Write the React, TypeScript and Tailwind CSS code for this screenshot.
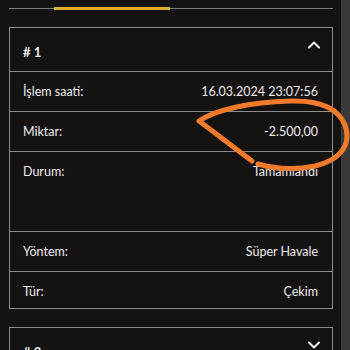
import { ChevronUp, ChevronDown } from "lucide-react"

const rows = [
  { label: "İşlem saati:", value: "16.03.2024 23:07:56", h: "h-[40px]" },
  { label: "Miktar:", value: "-2.500,00", h: "h-[40px]" },
  { label: "Durum:", value: "Tamamlandı", h: "h-[80px]" },
  { label: "Yöntem:", value: "Süper Havale", h: "h-[40px]" },
  { label: "Tür:", value: "Çekim", h: "h-[37px]" },
]

export default function App() {
  return (
    <div className="relative flex h-[350px] w-[350px] overflow-hidden bg-[#151212] font-['Lato',sans-serif] text-[12.5px] text-[#ececec]">
      <div className="flex-1 pl-[9px] pr-[8px]">
        {/* Tabs */}
        <div className="flex h-[9px] items-end border-b border-[#7a7a7a]">
          <div className="w-[45px]" />
          <div className="-mb-[2px] flex h-[24px] w-[116px] items-end justify-center border-b-[3px] border-[#ddb02c] pb-[8px] leading-none">
            Para yatırma geçmişi
          </div>
          <div className="flex h-[24px] flex-1 items-end justify-center pb-[9px] leading-none">Para çekme geçmişi</div>
        </div>

        {/* Card 1 */}
        <div className="mt-[18px] border border-[#8c8c8c]">
          <div className="flex h-[43px] items-center justify-between pl-[13px] pr-[8px] pt-[6px]">
            <span className="text-[13px] font-bold">#&nbsp;1</span>
            <ChevronUp className="-mt-[15px] h-[20px] w-[20px]" strokeWidth={2.5} />
          </div>
          {rows.map((r) => (
            <div
              key={r.label}
              className={`flex justify-between border-t border-[#8c8c8c] pl-[13px] pr-[14px] pt-[11px] ${r.h}`}
            >
              <span>{r.label}</span>
              <span>{r.value}</span>
            </div>
          ))}
        </div>

        {/* Card 2 */}
        <div className="mt-[18px] border border-[#8c8c8c]">
          <div className="flex h-[43px] items-center justify-between pl-[13px] pr-[8px] pt-[6px]">
            <span className="text-[13px] font-bold">#&nbsp;2</span>
            <ChevronDown className="-mt-[15px] h-[20px] w-[20px]" strokeWidth={2.5} />
          </div>
        </div>
      </div>
      <div className="w-[9px] bg-[#3a3a3a]" />

      {/* Hand-drawn highlight */}
      <svg className="pointer-events-none absolute left-0 top-0" width="350" height="350" viewBox="0 0 350 350">
        <path
          d="M252 161 C233 147 214 132 199 121 C215 110 250 102 290 101 C320 100 338 108 345 125 C352 145 340 160 315 166 C295 170 275 169 258 164"
          fill="none"
          stroke="#f27a2c"
          strokeWidth="5"
          strokeLinecap="round"
          strokeLinejoin="round"
        />
      </svg>
    </div>
  )
}
